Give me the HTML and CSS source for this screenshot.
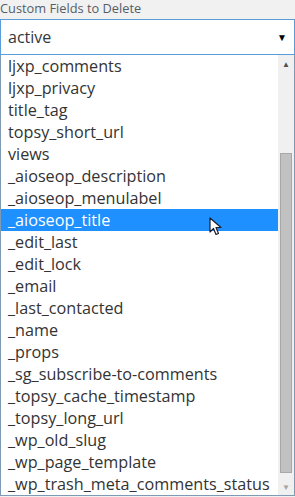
FILE: index.html
```html
<!DOCTYPE html>
<html>
<head>
<meta charset="UTF-8">
  <meta name="viewport" content="width=device-width, initial-scale=1.0">
  <title>Custom Fields to Delete</title>
  <link rel="stylesheet" href="styles.css">
</head>
<body>
<div id="panel">
  <div id="label">Custom Fields to Delete</div>
  <div id="picker">
    <span id="picked">active</span>
    <span id="caret">&#9660;</span>
  </div>
  <div id="dropdown">
    <ul id="options">
      <li>ljxp_comments</li>
      <li>ljxp_privacy</li>
      <li>title_tag</li>
      <li>topsy_short_url</li>
      <li>views</li>
      <li>_aioseop_description</li>
      <li>_aioseop_menulabel</li>
      <li class="hover">_aioseop_title</li>
      <li>_edit_last</li>
      <li>_edit_lock</li>
      <li>_email</li>
      <li>_last_contacted</li>
      <li>_name</li>
      <li>_props</li>
      <li>_sg_subscribe-to-comments</li>
      <li>_topsy_cache_timestamp</li>
      <li>_topsy_long_url</li>
      <li>_wp_old_slug</li>
      <li>_wp_page_template</li>
      <li>_wp_trash_meta_comments_status</li>
    </ul>
    <div id="scrollbar">
      <span class="arrow up">&#9650;</span>
      <div class="track"><div class="thumb"></div></div>
      <span class="arrow down">&#9660;</span>
    </div>
    <!-- mouse pointer -->
    <svg id="pointer" width="14" height="20" viewBox="0 0 14 20">
      <path d="M1 1 L1 15 L4.5 11.5 L7 17.5 L9.5 16.5 L7 10.5 L12 10.5 Z" fill="#fff" stroke="#1d1d2b" stroke-width="1.2" stroke-linejoin="round"/>
    </svg>
  </div>
</div>
</body>
</html>
```
FILE: styles.css
```css
body {
  margin: 0;
  padding: 0;
  background: #f1f1f1;
  font-family: "Open Sans", "Liberation Sans", sans-serif;
}

#panel {
  width: 295px;
}

#label {
  height: 19px;
  line-height: 17px;
  font-size: 12.8px;
  color: #555d66;
}

#picker {
  height: 34px;
  display: flex;
  align-items: center;
  justify-content: space-between;
  padding: 0 8px 0 7px;
  background: #fff;
  border: 1px solid #5b9dd9;
  font-size: 16px;
  color: #32373c;
}

#caret {
  font-size: 10px;
  color: #000;
  margin-right: -1px;
}

#dropdown {
  position: relative;
  display: flex;
  background: #fff;
  border: 1px solid #7e9ab5;
  border-top: none;
}

#options {
  flex: 1;
  list-style: none;
  margin: 0;
  padding: 0;
}

#options li {
  height: 22px;
  line-height: 22px;
  padding-left: 7px;
  font-size: 16.2px;
  color: #333;
  white-space: nowrap;
}

#options li.hover {
  background: #1e90ff;
  color: #fff;
}

#scrollbar {
  width: 16px;
  display: flex;
  flex-direction: column;
  background: #f0f0f0;
}

.arrow {
  height: 17px;
  line-height: 17px;
  text-align: center;
  font-size: 8px;
  color: #505050;
}

.arrow.down {
  color: #a3a3a3;
}

.track {
  flex: 1;
  padding: 81px 2px 5px 2px;
}

.thumb {
  height: 100%;
  background: #c1c1c1;
  border: 1px solid #a8a8a8;
  box-sizing: border-box;
}

#pointer {
  position: absolute;
  left: 208px;
  top: 162px;
}
```
